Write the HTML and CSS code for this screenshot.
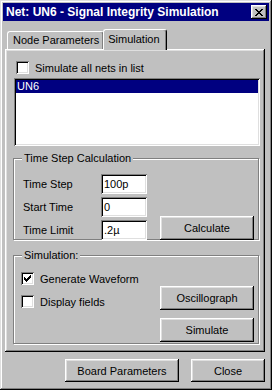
FILE: index.html
```html
<!DOCTYPE html>
<html lang="en">
<head>
  <meta charset="UTF-8" />
  <title>Net: UN6 - Signal Integrity Simulation</title>
  <link rel="stylesheet" href="styles.css">
</head>
<body>
  <div class="window">
    <div class="titlebar">
      <span class="title">Net: UN6 - Signal Integrity Simulation</span>
      <button class="title-btn" aria-label="Close">
        <svg width="8" height="7" viewBox="0 0 8 7"><path d="M0 0h2v1h1v1h2V1h1V0h2v1H7v1H6v1H5v1h1v1h1v1h1v1H6V6H5V5H3v1H2v1H0V6h1V5h1V4h1V3H2V2H1V1H0z" fill="#000"/></svg>
      </button>
    </div>

    <div class="content">
      <!-- pestañas -->
      <div class="tabs">
        <div class="tab">Node Parameters</div>
        <div class="tab active">Simulation</div>
      </div>

      <div class="panel">
        <label class="check-row">
          <span class="checkbox"></span>
          <span>Simulate all nets in list</span>
        </label>

        <div class="listbox">
          <div class="list-item selected">UN6</div>
        </div>

        <!-- Time Step Calculation -->
        <div class="group group-time">
          <span class="group-title">Time Step Calculation</span>
          <div class="group-body">
            <div class="fields">
              <div class="field-row"><span class="field-label">Time Step</span><span class="field">100p</span></div>
              <div class="field-row"><span class="field-label">Start Time</span><span class="field">0</span></div>
              <div class="field-row"><span class="field-label">Time Limit</span><span class="field">.2µ</span></div>
            </div>
            <button class="btn btn-side">Calculate</button>
          </div>
        </div>

        <!-- Simulation -->
        <div class="group group-sim">
          <span class="group-title">Simulation:</span>
          <div class="group-body">
            <div class="checks">
              <label class="check-row">
                <span class="checkbox">
                  <svg width="7" height="7" viewBox="0 0 7 7"><path d="M6 0h1v3H6v1H5v1H4v1H3v1H2V6H1V5H0V2h1v1h1v1h1V3h1V2h1V1h1z" fill="#000"/></svg>
                </span>
                <span>Generate Waveform</span>
              </label>
              <label class="check-row">
                <span class="checkbox"></span>
                <span>Display fields</span>
              </label>
            </div>
            <div class="side-buttons">
              <button class="btn btn-side">Oscillograph</button>
              <button class="btn btn-side">Simulate</button>
            </div>
          </div>
        </div>
      </div>

      <div class="footer">
        <button class="btn btn-board">Board Parameters</button>
        <button class="btn btn-close">Close</button>
      </div>
    </div>
  </div>
</body>
</html>
```
FILE: styles.css
```css
* { box-sizing: border-box; }
body {
  margin: 0;
  font-family: "Liberation Sans", Arial, sans-serif;
  font-size: 11px;
  color: #000;
  background: #c0c0c0;
}
.window {
  width: 272px;
  height: 390px;
  background: #c0c0c0;
  padding: 3px;
  box-shadow: inset -1px -1px #000, inset 1px 1px #dfdfdf,
              inset -2px -2px #808080, inset 2px 2px #fff;
}
/* Barra de título */
.titlebar {
  height: 18px;
  background: #000080;
  color: #fff;
  display: flex;
  align-items: center;
  justify-content: space-between;
  padding: 0 2px 0 3px;
}
.title {
  font-weight: bold;
  font-size: 12px;
  white-space: nowrap;
}
.title-btn {
  width: 16px;
  height: 14px;
  padding: 0;
  border: none;
  background: #c0c0c0;
  display: flex;
  align-items: center;
  justify-content: center;
  box-shadow: inset -1px -1px #000, inset 1px 1px #fff,
              inset -2px -2px #808080, inset 2px 2px #dfdfdf;
}
.content {
  padding: 7px 4px 0 2px;
}
/* Pestañas */
.tabs {
  display: flex;
  align-items: flex-end;
  height: 21px;
  padding-left: 2px;
  position: relative;
  z-index: 1;
}
.tab {
  height: 18px;
  line-height: 17px;
  padding: 0 4px 0 5px;
  background: #c0c0c0;
  border-top: 1px solid #fff;
  border-left: 1px solid #fff;
  border-right: 1px solid #000;
  border-radius: 3px 3px 0 0;
  box-shadow: inset -1px 0 #808080;
  white-space: nowrap;
}
.tab.active {
  height: 21px;
  line-height: 19px;
  margin: 0 -2px -1px -1px;
  padding: 0 6px 0 4px;
}
.panel {
  height: 303px;
  padding: 12px 6px 0 8px;
  box-shadow: inset -1px -1px #000, inset 1px 1px #fff,
              inset -2px -2px #808080, inset 2px 2px #dfdfdf;
}
/* Casillas */
.check-row {
  display: flex;
  align-items: center;
  gap: 6px;
  height: 13px;
  white-space: nowrap;
}
.panel > .check-row {
  margin-left: 3px;
}
.checkbox {
  width: 13px;
  height: 13px;
  flex: none;
  background: #fff;
  display: flex;
  align-items: center;
  justify-content: center;
  box-shadow: inset 1px 1px #808080, inset -1px -1px #fff,
              inset 2px 2px #000, inset -2px -2px #dfdfdf;
}
.listbox {
  height: 68px;
  margin: 4px -1px 0 1px;
  padding: 2px;
  background: #fff;
  box-shadow: inset 1px 1px #808080, inset -1px -1px #fff,
              inset 2px 2px #000, inset -2px -2px #dfdfdf;
}
.list-item {
  height: 13px;
  line-height: 13px;
  padding-left: 1px;
}
.list-item.selected {
  background: #000080;
  color: #fff;
}
/* Grupos */
.group {
  border: 1px solid #808080;
  box-shadow: inset 1px 1px #fff, 1px 1px #fff;
}
.group-title {
  display: inline-block;
  margin: -8px 0 0 8px;
  padding: 0 2px;
  background: #c0c0c0;
  height: 14px;
  line-height: 14px;
  vertical-align: top;
}
.group-time {
  height: 82px;
  margin-top: 12px;
}
.group-time .group-body {
  display: flex;
  justify-content: space-between;
  align-items: flex-end;
  padding: 3px 4px 0 9px;
}
.fields {
  display: flex;
  flex-direction: column;
  gap: 3px;
}
.field-row {
  display: flex;
  align-items: center;
}
.field-label {
  width: 78px;
}
.field {
  width: 46px;
  height: 20px;
  line-height: 20px;
  padding-left: 3px;
  background: #fff;
  box-shadow: inset 1px 1px #808080, inset -1px -1px #fff,
              inset 2px 2px #000, inset -2px -2px #dfdfdf;
}
.group-sim {
  height: 89px;
  margin-top: 15px;
}
.group-sim .group-body {
  display: flex;
  justify-content: space-between;
  padding: 4px 4px 0 7px;
}
.checks {
  display: flex;
  flex-direction: column;
  gap: 10px;
}
.side-buttons {
  display: flex;
  flex-direction: column;
  gap: 8px;
  margin-top: 14px;
}
/* Botones */
.btn {
  font-family: inherit;
  font-size: 11px;
  color: #000;
  background: #c0c0c0;
  border: none;
  padding: 0;
  height: 24px;
  box-shadow: inset -1px -1px #000, inset 1px 1px #fff,
              inset -2px -2px #808080, inset 2px 2px #dfdfdf;
}
.btn-side {
  width: 94px;
}
.footer {
  display: flex;
  justify-content: flex-end;
  gap: 12px;
  margin-top: 7px;
}
.btn-board {
  width: 114px;
  height: 23px;
}
.btn-close {
  width: 74px;
  height: 23px;
}
```
